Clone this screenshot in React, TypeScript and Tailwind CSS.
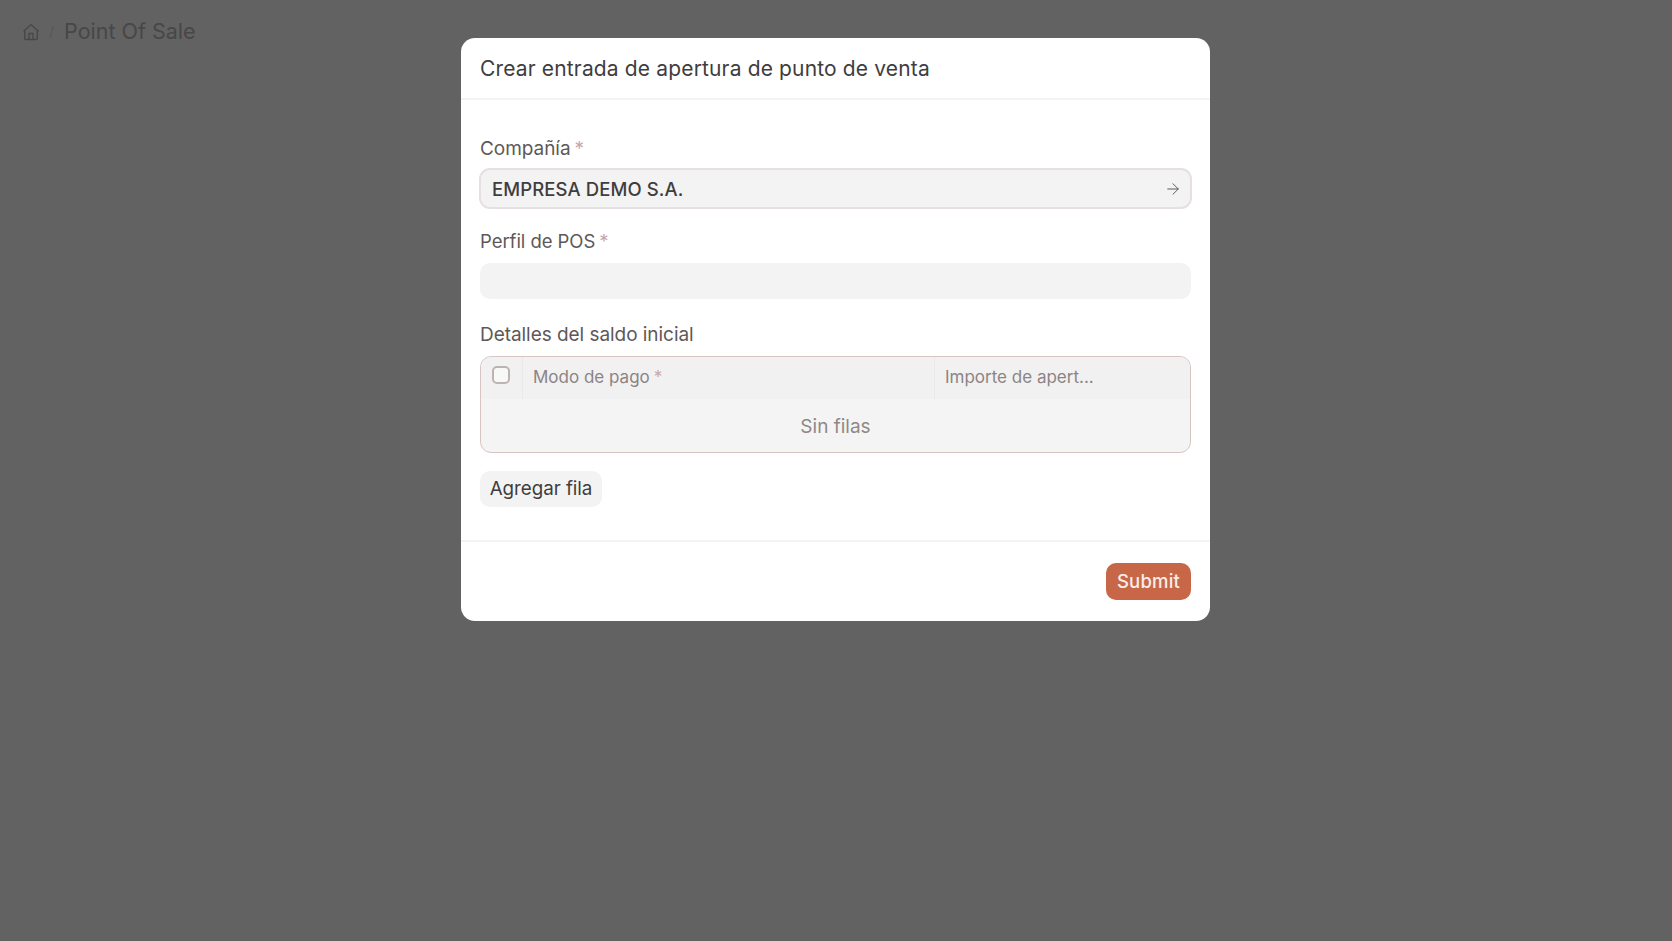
import React from "react";
import { ArrowRight } from "lucide-react";

const Req = () => <span className="ml-[4px] text-[#c9a5a5]">*</span>;

const App = () => {
  return (
    <div className="relative h-[941px] overflow-hidden bg-[#626262] font-['Inter',sans-serif]">
      {/* page behind the dialog */}
      <div className="flex items-center pl-[21px] pt-[15px]">
        <svg width="20" height="20" viewBox="0 0 20 20" fill="none" stroke="#474747" strokeWidth="1.3" className="mt-[1px]">
          <path d="M2.5 9.2 10 2.5l7.5 6.7M3.7 8.2v8.3a1 1 0 0 0 1 1h10.6a1 1 0 0 0 1-1V8.2" />
          <path d="M8 17.5v-6h4v6" />
        </svg>
        <span className="ml-[8px] mr-[10px] text-[14px] text-[#575757]">/</span>
        <span className="text-[21.5px] font-normal text-[#474747]">Point Of Sale</span>
      </div>

      {/* dialog */}
      <div className="absolute inset-0 pt-[38px]">
        <div className="ml-[461px] w-[749px] rounded-[14px] bg-white text-[#4a4444]">
          <div className="flex h-[62px] items-center border-b-2 border-[#f3f3f3] pl-[19px]">
            <h4 className="text-[21px] font-normal leading-none tracking-[0.15px] text-[#3f3d3d]">Crear entrada de apertura de punto de venta</h4>
          </div>

          <div className="flex flex-col px-[19px] pt-[37px] pb-[33px]">
            <label className="text-[19px] leading-[24px] tracking-[-0.05px] text-[#5e5858]">
              Compañía<Req />
            </label>
            <div className="mt-[7px] -mx-[1px] flex h-[41px] items-center justify-between rounded-[11px] border-2 border-[#e6e0e0] bg-[#f3f3f3] pl-[11px] pr-[8px]">
              <span className="pt-[2px] text-[18.5px] font-medium tracking-[0.1px] text-[#3f3d3d]">EMPRESA DEMO S.A.</span>
              <ArrowRight size={18} strokeWidth={1.2} className="mt-[1px] text-[#4f4a4a]" />
            </div>

            <label className="mt-[20px] text-[18.5px] leading-[24px] tracking-[-0.05px] text-[#5e5858]">
              Perfil de POS<Req />
            </label>
            <div className="mt-[10px] h-[36px] rounded-[10px] bg-[#f3f3f3]" />

            <div className="mt-[23px] pt-[1px] text-[19px] leading-[23px] tracking-[-0.05px] text-[#5e5858]">Detalles del saldo inicial</div>
            <div className="mt-[10px] h-[97px] overflow-hidden rounded-[11px] border border-[#d9c4c4] bg-[#f4f4f4]">
              <div className="flex h-[42px] bg-[#f1f1f1] text-[17px] tracking-[0px] text-[#8c8484]">
                <div className="flex w-[42px] justify-center border-r border-[#e9e9e9] pt-[9px] pr-[2px]">
                  <div className="h-[18px] w-[18px] rounded-[5px] border-2 border-[#bdb3b3] bg-[#f8f8f8]" />
                </div>
                <div className="flex w-[412px] items-center border-r border-[#e9e9e9] pl-[10px] pb-[1px]">
                  <span>
                    Modo de pago<Req />
                  </span>
                </div>
                <div className="flex flex-1 items-center pl-[10px] pb-[1px]">Importe de apert...</div>
              </div>
              <div className="flex h-[53px] items-center justify-center pt-[3px] text-[19px] tracking-[0px] text-[#8f8888]">Sin filas</div>
            </div>

            <button className="mt-[18px] h-[36px] w-[122px] rounded-[10px] bg-[#f3f3f3] pt-[1px] text-[18.8px] tracking-[-0.05px] text-[#3f3d3d]">Agregar fila</button>
          </div>

          <div className="flex h-[81px] justify-end border-t-2 border-[#f3f3f3] pr-[19px] pt-[21px]">
            <button className="h-[37px] w-[85px] rounded-[10px] bg-[#c86747] text-[18.5px] font-medium tracking-[0.2px] text-[#f7eeea]">Submit</button>
          </div>
        </div>
      </div>
    </div>
  );
};

export default App;
